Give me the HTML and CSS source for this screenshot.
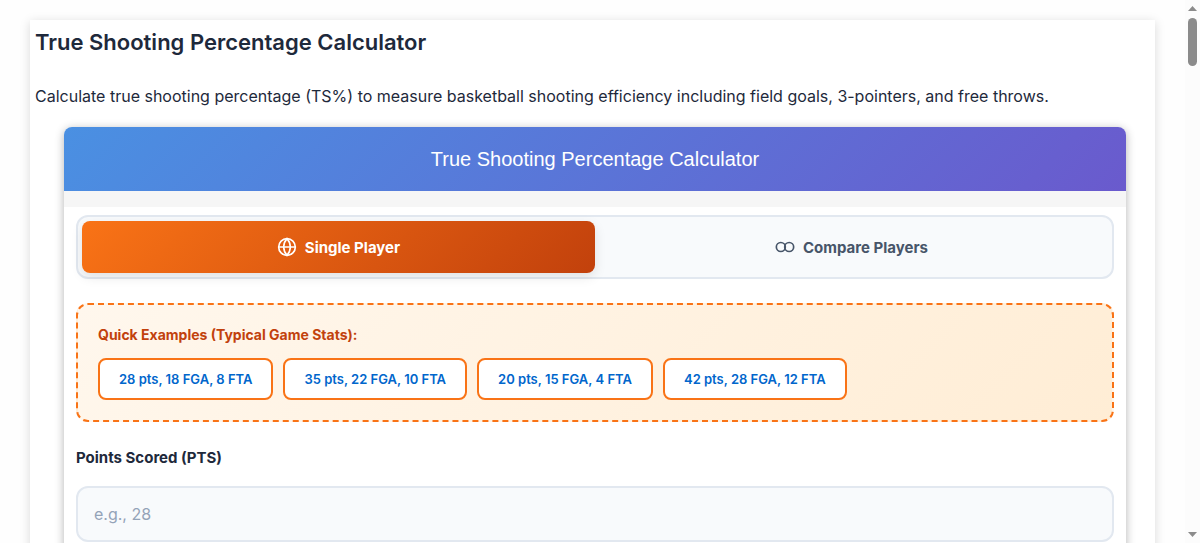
FILE: index.html
```html
<!DOCTYPE html>
<html lang="en">
<head>
  <meta charset="UTF-8">
  <meta name="viewport" content="width=device-width, initial-scale=1.0">
  <title>True Shooting Percentage Calculator</title>
  <link rel="stylesheet" href="styles.css">
</head>
<body>
  <main class="page">
    <h1>True Shooting Percentage Calculator</h1>
    <p class="intro">Calculate true shooting percentage (TS%) to measure basketball shooting efficiency including field goals, 3-pointers, and free throws.</p>

    <section class="calculator">
      <h2 class="calculator-header">True Shooting Percentage Calculator</h2>
      <div class="calculator-body">
        <div class="tabs">
          <button type="button" class="tab active">
            <svg width="20" height="20" viewBox="0 0 24 24" fill="none" stroke="currentColor" stroke-width="2">
              <circle cx="12" cy="12" r="10"/>
              <path d="M2 12h20"/>
              <path d="M12 2a15.3 15.3 0 0 1 4 10 15.3 15.3 0 0 1-4 10 15.3 15.3 0 0 1-4-10 15.3 15.3 0 0 1 4-10z"/>
            </svg>
            Single Player
          </button>
          <button type="button" class="tab">
            <svg width="20" height="20" viewBox="0 0 24 24" fill="none" stroke="currentColor" stroke-width="2">
              <circle cx="7" cy="12" r="5.4"/>
              <circle cx="17" cy="12" r="5.4"/>
            </svg>
            Compare Players
          </button>
        </div>

        <div class="examples">
          <h3>Quick Examples (Typical Game Stats):</h3>
          <div class="example-buttons">
            <button type="button" class="example">28 pts, 18 FGA, 8 FTA</button>
            <button type="button" class="example">35 pts, 22 FGA, 10 FTA</button>
            <button type="button" class="example">20 pts, 15 FGA, 4 FTA</button>
            <button type="button" class="example">42 pts, 28 FGA, 12 FTA</button>
          </div>
        </div>

        <div class="field">
          <label for="points">Points Scored (PTS)</label>
          <input type="text" inputmode="numeric" id="points" placeholder="e.g., 28">
        </div>
      </div>
    </section>
  </main>

  <div class="scrollbar" aria-hidden="true">
    <svg width="9" height="5" viewBox="0 0 9 5"><path d="M4.5 0L9 5H0z"/></svg>
    <div class="thumb"></div>
    <svg width="9" height="5" viewBox="0 0 9 5"><path d="M0 0h9L4.5 5z"/></svg>
  </div>
</body>
</html>
```

FILE: styles.css
```css
* {
  box-sizing: border-box;
}

body {
  margin: 0;
  height: 100vh;
  overflow: hidden;
  padding: 20px 45px 0 30px;
  background-color: #fefefe;
  color: #1e293b;
  font-family: Inter, sans-serif;
  font-size: 16px;
}

.page {
  min-height: 100vh;
  padding: 5px;
  background-color: #fff;
  box-shadow: 0 2px 10px rgba(0, 0, 0, 0.15);
}

h1 {
  margin: 0 0 24px;
  font-size: 22px;
  font-weight: 600;
  line-height: 35px;
}

.intro {
  margin: 0 0 19px;
  line-height: 24px;
}

.calculator {
  margin: 0 24px 0 29px;
  border-radius: 8px;
  background-color: #fff;
  box-shadow: 0 2px 10px rgba(0, 0, 0, 0.3);
  overflow: hidden;
}

.calculator-header {
  margin: 0;
  border-bottom: 16px solid #f6f6f6;
  background: linear-gradient(135deg, #4a90e2, #6a5acd);
  background-clip: padding-box;
  color: #fff;
  font-family: "Liberation Sans", sans-serif;
  font-size: 20px;
  font-weight: 400;
  line-height: 64px;
  text-align: center;
}

.calculator-body {
  padding: 8px 12px 40px;
}

.tabs {
  display: flex;
  padding: 4px;
  border: 2px solid #e2e8f0;
  border-radius: 12px;
  background-color: #f8fafc;
}

.tab {
  display: flex;
  flex: 1;
  align-items: center;
  justify-content: center;
  gap: 8px;
  height: 52px;
  border: none;
  border-radius: 8px;
  background: transparent;
  color: #475569;
  font-family: Inter, sans-serif;
  font-size: 15px;
  font-weight: 700;
  cursor: pointer;
}

.tab.active {
  background: linear-gradient(135deg, #f97316, #c2410c);
  box-shadow: 0 4px 12px rgba(0, 0, 0, 0.1);
  color: #fff;
}

.examples {
  margin-top: 24px;
  padding: 20px;
  border: 2px dashed #f97316;
  border-radius: 12px;
  background: linear-gradient(135deg, #fff7ed, #ffedd5);
}

.examples h3 {
  margin: 0 0 14px;
  color: #c2410c;
  font-size: 14px;
  font-weight: 700;
  line-height: 19px;
}

.example-buttons {
  display: flex;
  flex-wrap: wrap;
  gap: 10px;
}

.example {
  height: 42px;
  padding: 0 19px;
  border: 2px solid #f97316;
  border-radius: 8px;
  background-color: #fff;
  color: #0066cc;
  font-family: Inter, sans-serif;
  font-size: 13px;
  font-weight: 600;
  cursor: pointer;
}

.field {
  margin-top: 24px;
}

.field label {
  display: block;
  margin-bottom: 16px;
  font-size: 15px;
  font-weight: 700;
  line-height: 24px;
}

.field input {
  width: 100%;
  height: 56px;
  padding: 0 16px;
  border: 2px solid #e2e8f0;
  border-radius: 12px;
  background-color: #f8fafc;
  color: #1e293b;
  font-family: Inter, sans-serif;
  font-size: 16px;
}

.field input::placeholder {
  color: #94a3b8;
}

.scrollbar {
  position: fixed;
  top: 0;
  right: 0;
  bottom: 0;
  display: flex;
  flex-direction: column;
  align-items: center;
  width: 15px;
  padding: 6px 0;
  background-color: #fcfcfc;
  fill: #8b8b8b;
}

.thumb {
  width: 9px;
  height: 48px;
  margin: 7px 0 auto;
  border-radius: 5px;
  background-color: #8b8b8b;
}
```
